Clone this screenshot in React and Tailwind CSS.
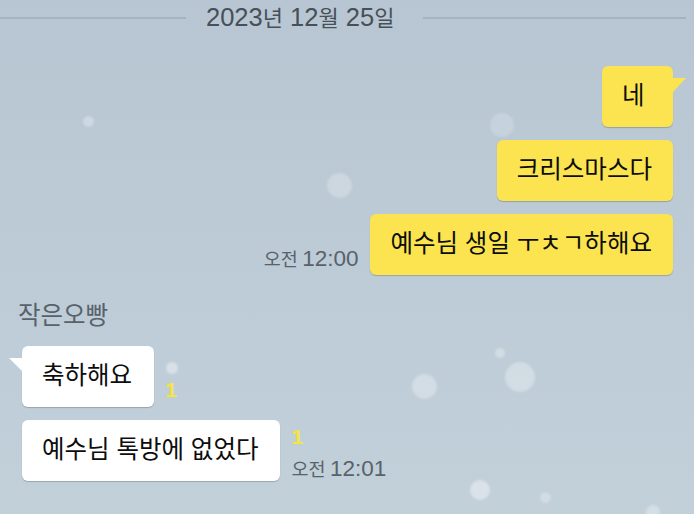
import React from 'react';

const font = { fontFamily: '"Liberation Sans", "Noto Sans CJK KR", sans-serif' };

// soft snow flakes floating behind the chat
const flakes = [
  { x: 88, y: 121, d: 11, o: 'bg-white/30' },
  { x: 339, y: 185, d: 25, o: 'bg-white/25' },
  { x: 502, y: 125, d: 24, o: 'bg-white/20' },
  { x: 172, y: 368, d: 12, o: 'bg-white/40' },
  { x: 424, y: 386, d: 25, o: 'bg-white/30' },
  { x: 500, y: 353, d: 10, o: 'bg-white/30' },
  { x: 520, y: 377, d: 30, o: 'bg-white/30' },
  { x: 480, y: 490, d: 20, o: 'bg-white/40' },
  { x: 545, y: 497, d: 11, o: 'bg-white/25' },
  { x: 653, y: 512, d: 14, o: 'bg-white/30' },
];

const Time = ({ children }) => (
  <span className="text-[#58626b] leading-none whitespace-nowrap" style={font}>
    <span className="text-[18.5px]">오전</span>{' '}
    <span className="text-[22.5px]">{children}</span>
  </span>
);

const MyBubble = ({ text, tail }) => (
  <div className="relative h-[61px] min-w-[71px] bg-[#fbe44f] rounded-[6px] pl-[20px] pr-[21px] flex items-center shadow-[0_1px_1px_rgba(0,0,0,0.2)]">
    <span className="text-[24.5px] text-[#0d0d0d]" style={font}>{text}</span>
    {tail && (
      <svg className="absolute -right-[13px] top-[12px]" width="14" height="16" viewBox="0 0 14 16">
        <polygon points="0,0 14,0 0,15" fill="#fbe44f" />
      </svg>
    )}
  </div>
);

const FriendBubble = ({ text, tail }) => (
  <div className="relative h-[61px] bg-white rounded-[6px] pl-[20px] pr-[22px] flex items-center shadow-[0_1px_1px_rgba(0,0,0,0.2)]">
    <span className="text-[24.5px] text-[#0d0d0d]" style={font}>{text}</span>
    {tail && (
      <svg className="absolute -left-[13px] top-[12px]" width="14" height="15" viewBox="0 0 14 15">
        <polygon points="0,0 14,0 14,14" fill="#ffffff" />
      </svg>
    )}
  </div>
);

const Unread = () => (
  <span className="text-[21px] leading-none font-semibold text-[#f6e53c]" style={font}>1</span>
);

export default function App() {
  return (
    <div className="relative w-full h-[514px] overflow-hidden bg-gradient-to-b from-[#b7c6d2] to-[#c2d0da]" style={font}>
      {flakes.map((f, i) => (
        <div
          key={i}
          className={`absolute rounded-full blur-[1px] ${f.o}`}
          style={{ left: f.x - f.d / 2, top: f.y - f.d / 2, width: f.d, height: f.d }}
        />
      ))}

      <div className="relative flex flex-col">
        {/* date divider */}
        <div className="h-[35px] flex items-center pr-[8px]">
          <div className="w-[186px] h-[2px] bg-[#a6b4bf]" />
          <div className="px-[20px] text-[#474f57] leading-none whitespace-nowrap">
            <span className="text-[25.5px]">2023</span>
            <span className="text-[22px]">년</span>
            <span className="text-[25.5px]"> 12</span>
            <span className="text-[22px]">월</span>
            <span className="text-[25.5px]"> 25</span>
            <span className="text-[22px]">일</span>
          </div>
          <div className="flex-1 h-[2px] bg-[#a6b4bf] ml-[9px]" />
        </div>

        {/* my messages */}
        <div className="flex flex-col items-end gap-[13px] pr-[21px] mt-[31px]">
          <MyBubble text="네" tail />
          <MyBubble text="크리스마스다" />
          <div className="flex items-end gap-[12px]">
            <div className="pb-[2px]"><Time>12:00</Time></div>
            <MyBubble text="예수님 생일 ㅜㅊㄱ하해요" />
          </div>
        </div>

        {/* friend */}
        <div className="pl-[18px] mt-[26px] h-[30px] flex items-center">
          <span className="text-[24.5px] text-[#58626b]">작은오빵</span>
        </div>
        <div className="flex flex-col items-start gap-[13px] pl-[22px] mt-[15px]">
          <div className="flex items-end gap-[11px]">
            <FriendBubble text="축하해요" tail />
            <div className="pb-[3px]"><Unread /></div>
          </div>
          <div className="flex items-end gap-[11px]">
            <FriendBubble text="예수님 톡방에 없었다" />
            <div className="flex flex-col items-start gap-[11px] pb-[1px]">
              <Unread />
              <Time>12:01</Time>
            </div>
          </div>
        </div>
      </div>
    </div>
  );
}
